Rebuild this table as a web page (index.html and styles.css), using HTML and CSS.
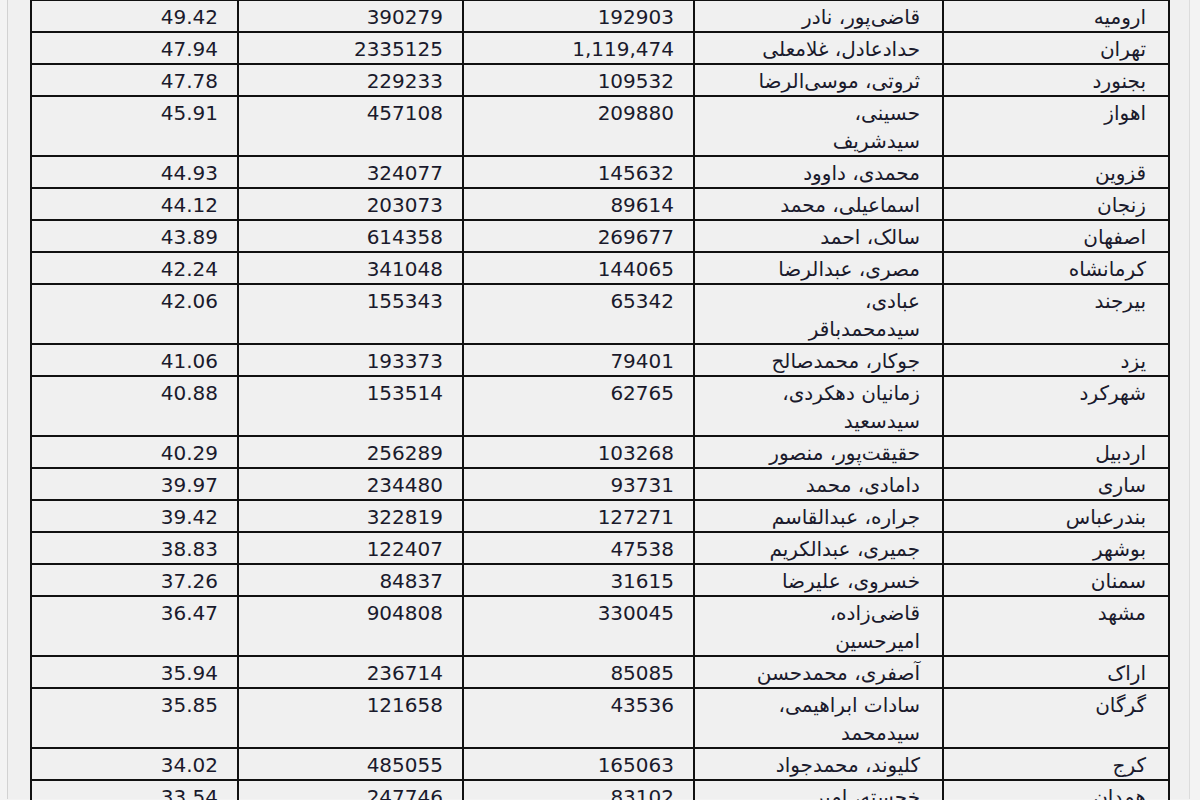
FILE: index.html
```html
<!DOCTYPE html>
<html lang="fa">
<head>
<meta charset="utf-8">
<title>نتایج</title>
<link rel="stylesheet" href="styles.css">
</head>
<body>
<div class="frame">
  <table class="results" dir="rtl">
    <colgroup>
      <col class="c-city">
      <col class="c-name">
      <col class="c-votes">
      <col class="c-voters">
      <col class="c-pct">
    </colgroup>
    <tbody>
      <tr><td>ارومیه</td><td>قاضی‌پور، نادر</td><td class="num">192903</td><td class="num">390279</td><td class="num">49.42</td></tr>
      <tr><td>تهران</td><td>حدادعادل، غلامعلی</td><td class="num">1,119,474</td><td class="num">2335125</td><td class="num">47.94</td></tr>
      <tr><td>بجنورد</td><td>ثروتی، موسی‌الرضا</td><td class="num">109532</td><td class="num">229233</td><td class="num">47.78</td></tr>
      <tr><td>اهواز</td><td>حسینی،<br>سیدشریف</td><td class="num">209880</td><td class="num">457108</td><td class="num">45.91</td></tr>
      <tr><td>قزوین</td><td>محمدی، داوود</td><td class="num">145632</td><td class="num">324077</td><td class="num">44.93</td></tr>
      <tr><td>زنجان</td><td>اسماعیلی، محمد</td><td class="num">89614</td><td class="num">203073</td><td class="num">44.12</td></tr>
      <tr><td>اصفهان</td><td>سالک، احمد</td><td class="num">269677</td><td class="num">614358</td><td class="num">43.89</td></tr>
      <tr><td>کرمانشاه</td><td>مصری، عبدالرضا</td><td class="num">144065</td><td class="num">341048</td><td class="num">42.24</td></tr>
      <tr><td>بیرجند</td><td>عبادی،<br>سیدمحمدباقر</td><td class="num">65342</td><td class="num">155343</td><td class="num">42.06</td></tr>
      <tr><td>یزد</td><td>جوکار، محمدصالح</td><td class="num">79401</td><td class="num">193373</td><td class="num">41.06</td></tr>
      <tr><td>شهرکرد</td><td>زمانیان دهکردی،<br>سیدسعید</td><td class="num">62765</td><td class="num">153514</td><td class="num">40.88</td></tr>
      <tr><td>اردبیل</td><td>حقیقت‌پور، منصور</td><td class="num">103268</td><td class="num">256289</td><td class="num">40.29</td></tr>
      <tr><td>ساری</td><td>دامادی، محمد</td><td class="num">93731</td><td class="num">234480</td><td class="num">39.97</td></tr>
      <tr><td>بندرعباس</td><td>جراره، عبدالقاسم</td><td class="num">127271</td><td class="num">322819</td><td class="num">39.42</td></tr>
      <tr><td>بوشهر</td><td>جمیری، عبدالکریم</td><td class="num">47538</td><td class="num">122407</td><td class="num">38.83</td></tr>
      <tr><td>سمنان</td><td>خسروی، علیرضا</td><td class="num">31615</td><td class="num">84837</td><td class="num">37.26</td></tr>
      <tr><td>مشهد</td><td>قاضی‌زاده،<br>امیرحسین</td><td class="num">330045</td><td class="num">904808</td><td class="num">36.47</td></tr>
      <tr><td>اراک</td><td>آصفری، محمدحسن</td><td class="num">85085</td><td class="num">236714</td><td class="num">35.94</td></tr>
      <tr><td>گرگان</td><td>سادات ابراهیمی،<br>سیدمحمد</td><td class="num">43536</td><td class="num">121658</td><td class="num">35.85</td></tr>
      <tr><td>کرج</td><td>کلیوند، محمدجواد</td><td class="num">165063</td><td class="num">485055</td><td class="num">34.02</td></tr>
      <tr><td>همدان</td><td>خجسته، امیر</td><td class="num">83102</td><td class="num">247746</td><td class="num">33.54</td></tr>
      <tr><td>&nbsp;</td><td>&nbsp;</td><td class="num">&nbsp;</td><td class="num">&nbsp;</td><td class="num">&nbsp;</td></tr>
    </tbody>
  </table>
</div>
</body>
</html>
```

FILE: styles.css
```css
html, body {
  margin: 0;
  padding: 0;
  height: 100%;
  overflow: hidden;
  background: #f3f3f3;
}

.frame {
  margin-left: 7px;
  width: 1183px;
  height: 100%;
  box-sizing: border-box;
  border-left: 1px solid #d2d2d2;
  border-right: 1px solid #dcdcdc;
  background: #f0f0f0;
  padding-left: 22px;
  padding-top: 0;
}

.results {
  border-collapse: collapse;
  table-layout: fixed;
  width: 1138px;
  margin-top: -1px;
  font-family: "DejaVu Sans", sans-serif;
  font-size: 20px;
  color: #1a1a2c;
}

.c-city { width: 226px; }
.c-name { width: 249px; }
.c-votes { width: 231px; }
.c-voters { width: 225px; }
.c-pct { width: 207px; }

.results td {
  border: 2px solid #111;
  padding: 2px 22px 0 8px;
  line-height: 28px;
  vertical-align: top;
  text-align: right;
  white-space: nowrap;
  overflow: hidden;
}

.results td.num {
  direction: ltr;
  text-align: right;
  padding-right: 19px;
}
```
